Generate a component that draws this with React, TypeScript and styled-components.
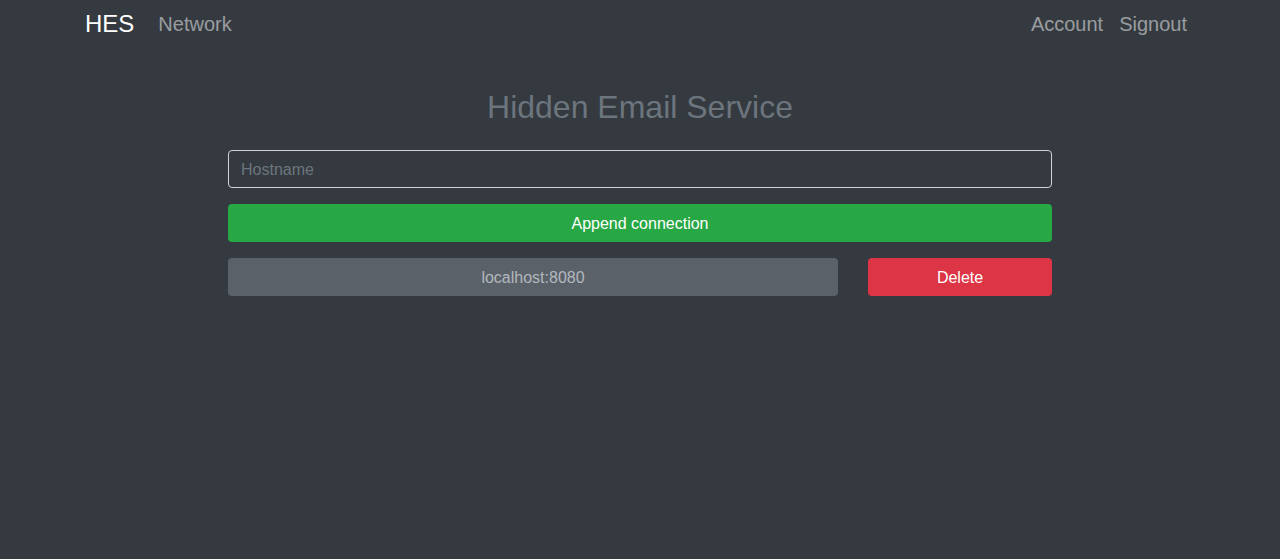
import React from "react";
import styled, { createGlobalStyle } from "styled-components";

const Global = createGlobalStyle`
  html, body { margin: 0; padding: 0; }
  body {
    background: #343a40;
    font-family: "Liberation Sans", Arial, sans-serif;
    font-size: 16px;
    line-height: 1.5;
    color: #fff;
    min-height: 559px;
  }
  * { box-sizing: border-box; }
`;

const Navbar = styled.nav`
  display: flex;
  align-items: center;
  justify-content: space-between;
  width: 1140px;
  height: 48px;
  margin: 0 auto;
  padding: 0 15px;
`;

const NavGroup = styled.div`
  display: flex;
  align-items: center;
`;

const Brand = styled.a`
  font-size: 24px;
  line-height: 30px;
  margin-right: 16px;
  color: #fff;
  text-decoration: none;
`;

const NavLink = styled.a`
  padding: 0 8px;
  line-height: 30px;
  font-size: 20px;
  color: rgba(255, 255, 255, 0.5);
  text-decoration: none;
`;

const Main = styled.main`
  width: 824px;
  margin: 0 auto;
  padding-top: 40px;
  display: flex;
  flex-direction: column;
`;

const Title = styled.h2`
  margin: 0 0 24px;
  font-size: 32px;
  line-height: 38px;
  font-weight: 500;
  text-align: center;
  color: #6c757d;
`;

const Input = styled.input`
  height: 38px;
  width: 100%;
  padding: 7px 12px 5px;
  font-family: inherit;
  font-size: 16px;
  color: #fff;
  background: transparent;
  border: 1px solid #ced4da;
  border-radius: 4px;
  margin-bottom: 16px;
  outline: none;
  &::placeholder { color: #6c757d; }
`;

const Button = styled.button<{ $variant: "success" | "danger" | "secondary" }>`
  height: 38px;
  width: 100%;
  padding: 2px 12px 0;
  border: none;
  border-radius: 4px;
  font-family: inherit;
  font-size: 16px;
  line-height: 24px;
  background: ${(p) =>
    p.$variant === "success" ? "#28a745" : p.$variant === "danger" ? "#dc3545" : "#5a6169"};
  color: ${(p) => (p.$variant === "secondary" ? "#b2b8be" : "#fff")};
`;

const Row = styled.div`
  display: grid;
  grid-template-columns: 610px 184px;
  justify-content: space-between;
  margin-top: 16px;
`;

export default function App() {
  return (
    <>
      <Global />
      <Navbar>
        <NavGroup>
          <Brand href="#">HES</Brand>
          <NavLink href="#">Network</NavLink>
        </NavGroup>
        <NavGroup>
          <NavLink href="#">Account</NavLink>
          <NavLink href="#">Signout</NavLink>
        </NavGroup>
      </Navbar>
      <Main>
        <Title>Hidden Email Service</Title>
        <Input placeholder="Hostname" />
        <Button $variant="success">Append connection</Button>
        <Row>
          <Button $variant="secondary">localhost:8080</Button>
          <Button $variant="danger">Delete</Button>
        </Row>
      </Main>
    </>
  );
}
